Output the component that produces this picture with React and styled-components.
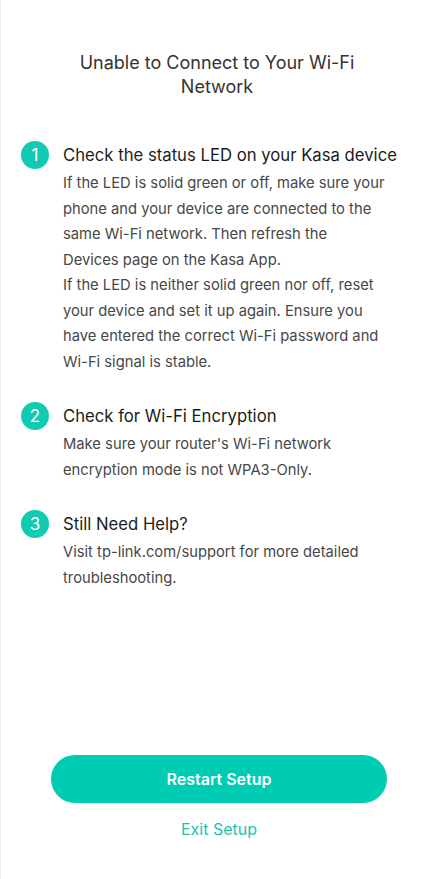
import styled, { createGlobalStyle } from "styled-components";

const GlobalStyle = createGlobalStyle`
  html, body {
    margin: 0;
    padding: 0;
    background: #fff;
  }
  body {
    font-family: Inter, "Noto Sans", "Liberation Sans", sans-serif;
    -webkit-font-smoothing: antialiased;
  }
`;

const Page = styled.div`
  min-height: 100vh;
  box-sizing: border-box;
  display: flex;
  flex-direction: column;
  border-left: 1px solid #efefef;
  padding: 51px 0 38px;
`;

const Title = styled.h1`
  margin: 0 auto;
  width: 290px;
  text-align: center;
  font-size: 18px;
  font-weight: 400;
  line-height: 24px;
  color: #333;
`;

const Steps = styled.ol`
  list-style: none;
  margin: 43px 0 0;
  padding: 0 20px;
  display: flex;
  flex-direction: column;
  gap: 28px;
`;

const Step = styled.li`
  display: grid;
  grid-template-columns: 28px 1fr;
  column-gap: 14px;
`;

const Badge = styled.span`
  width: 28px;
  height: 28px;
  margin-top: -1px;
  border-radius: 50%;
  background: #10cbb2;
  color: #fff;
  font-size: 17px;
  font-weight: 400;
  display: flex;
  align-items: center;
  justify-content: center;
`;

const StepTitle = styled.h2`
  margin: 0;
  font-size: 16.7px;
  font-weight: 400;
  line-height: 26px;
  color: #1c1c1c;
  white-space: nowrap;
`;

const StepText = styled.p`
  grid-column: 2;
  margin: 2px 0 0;
  max-width: 330px;
  font-size: 14.75px;
  line-height: 25.5px;
  color: #474747;
  white-space: pre-line;
`;

const Footer = styled.div`
  margin-top: auto;
  padding-left: 4px;
  display: flex;
  flex-direction: column;
  align-items: center;
  gap: 14px;
`;

const PrimaryButton = styled.button`
  width: 336px;
  height: 48px;
  border: none;
  border-radius: 24px;
  background: #00ccb4;
  color: #fff;
  font-family: inherit;
  font-size: 16px;
  font-weight: 600;
  cursor: pointer;
`;

const LinkButton = styled.button`
  border: none;
  background: none;
  padding: 0;
  color: #16c6ae;
  font-family: inherit;
  font-size: 16px;
  line-height: 24px;
  cursor: pointer;
`;

const steps = [
  {
    title: "Check the status LED on your Kasa device",
    text:
      "If the LED is solid green or off, make sure your phone and your device are connected to the same Wi-Fi network. Then refresh the\nDevices page on the Kasa App.\n" +
      "If the LED is neither solid green nor off, reset your device and set it up again. Ensure you have entered the correct Wi-Fi password and Wi-Fi signal is stable.",
  },
  {
    title: "Check for Wi-Fi Encryption",
    text: "Make sure your router's Wi-Fi network encryption mode is not WPA3-Only.",
  },
  {
    title: "Still Need Help?",
    text: "Visit tp-link.com/support for more detailed troubleshooting.",
  },
];

export default function App() {
  return (
    <>
      <GlobalStyle />
      <Page>
        <Title>Unable to Connect to Your Wi-Fi Network</Title>
        <Steps>
          {steps.map((s, i) => (
            <Step key={s.title}>
              <Badge>{i + 1}</Badge>
              <StepTitle>{s.title}</StepTitle>
              <StepText>{s.text}</StepText>
            </Step>
          ))}
        </Steps>
        <Footer>
          <PrimaryButton>Restart Setup</PrimaryButton>
          <LinkButton>Exit Setup</LinkButton>
        </Footer>
      </Page>
    </>
  );
}
